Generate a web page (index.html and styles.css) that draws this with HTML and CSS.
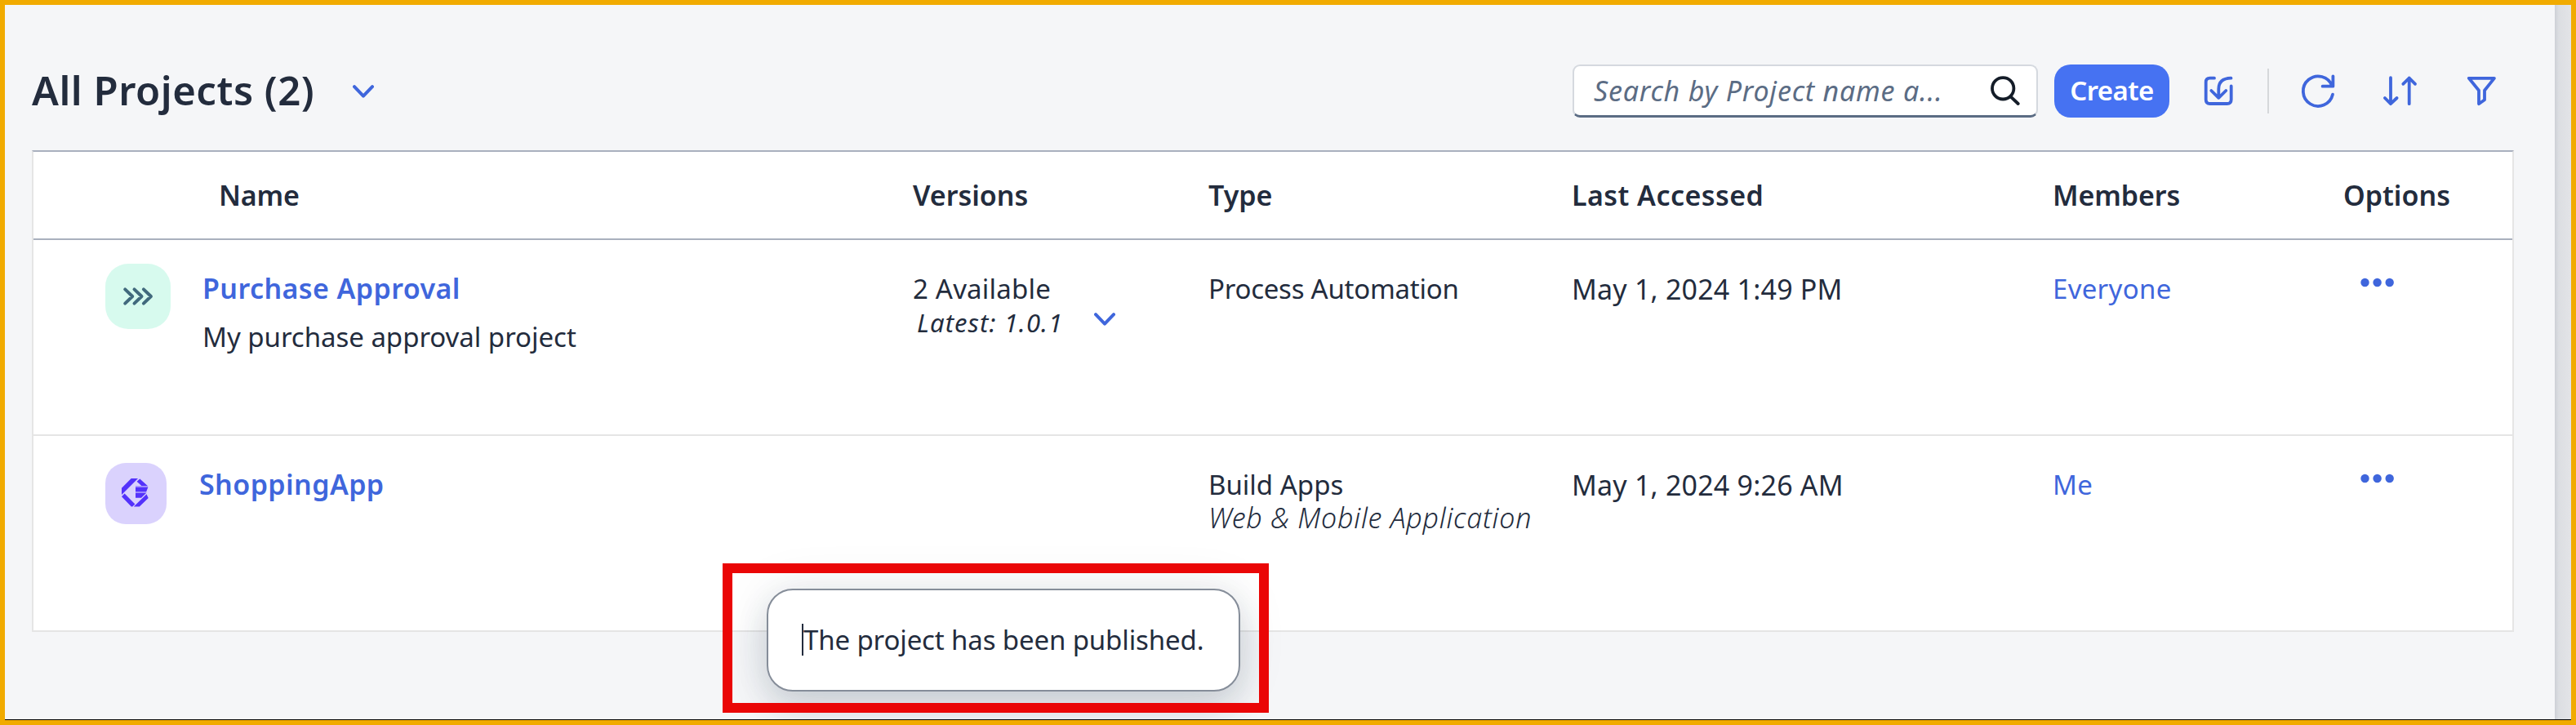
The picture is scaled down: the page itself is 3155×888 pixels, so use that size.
FILE: index.html
```
<!DOCTYPE html>
<html lang="en">
<head>
<meta charset="utf-8">
<title>All Projects</title>
<link rel="stylesheet" href="styles.css">
</head>
<body>
<div class="frame">
  <main class="page">
    <header class="toolbar">
      <h1 class="title">All Projects (2)</h1>
      <svg class="chevron title-chevron" viewBox="0 0 26 16"><path d="M2 2.2 13 13.6 24 2.2"/></svg>
      <div class="search">
        <span class="search-text">Search by Project name a...</span>
        <svg class="search-icon" viewBox="0 0 36 36"><circle cx="15.2" cy="15.3" r="13.2"/><path d="M24.6 25.4 33.7 34"/></svg>
      </div>
      <button class="create">Create</button>
      <svg class="tool tool-import" viewBox="0 0 60 65"><path d="M25 16.7H19.7Q14.7 16.7 14.7 21.7V43Q14.7 48 19.7 48H40.7Q45.7 48 45.7 43V26.5M45.5 16.7C35 17 30.3 22 30.3 30V40.3M21.3 32 30.3 40.8 39.3 32"/></svg>
      <span class="separator"></span>
      <svg class="tool tool-refresh" viewBox="0 0 60 65"><path d="M48 36.7A18.3 18.3 0 1 1 47.3 26.3M48.4 14.3V26.7H35.6"/></svg>
      <svg class="tool tool-sort" viewBox="0 0 60 65"><path d="M19 16.2V48M11.9 41 19 48.2 26.6 41M41.7 48.2V16.5M34.3 23.8 41.7 16.5 49 23.8"/></svg>
      <svg class="tool tool-filter" viewBox="0 0 60 65"><path d="M14.8 16.8H45.9L34 31.7V43.2L27 48.2V31.7Z"/></svg>
    </header>

    <section class="table">
      <div class="row head">
        <div class="cell h-name">Name</div>
        <div class="cell h-versions">Versions</div>
        <div class="cell h-type">Type</div>
        <div class="cell h-accessed">Last Accessed</div>
        <div class="cell h-members">Members</div>
        <div class="cell h-options">Options</div>
      </div>

      <div class="row item">
        <div class="name">
          <svg class="badge badge-process" viewBox="0 0 80 80"><path d="M24.2 31.4 33.2 40 24.2 48.6M35.5 31.4 44.5 40 35.5 48.6M46.9 31.4 55.9 40 46.9 48.6"/></svg>
          <div class="label">
            <a class="link-name">Purchase Approval</a>
            <span class="description">My purchase approval project</span>
          </div>
        </div>
        <div class="cell">
          <div class="available">2 Available</div>
          <div class="latest"><span>Latest: 1.0.1</span><svg class="chevron" viewBox="0 0 26 16"><path d="M2 2.2 13 13.6 24 2.2"/></svg></div>
        </div>
        <div class="cell process">Process Automation</div>
        <div class="cell date">May 1, 2024 1:49 PM</div>
        <div class="cell"><a class="member">Everyone</a></div>
        <div class="options"><svg class="dots" viewBox="0 0 42 12"><circle cx="5.5" cy="6" r="5.2"/><circle cx="20.6" cy="6" r="5.2"/><circle cx="35.7" cy="6" r="5.2"/></svg></div>
      </div>

      <div class="row item">
        <div class="name name-app">
          <svg class="badge badge-app" viewBox="0 0 75 75"><path d="M31.7 19H40L20 39V30.7ZM42.3 19.4 52 28.2H44.5L38.6 22.7ZM20 41.2 23.6 37.4 36.4 50.4 33.2 53.6H31.8ZM34.8 53.6H41.8L52.7 43 50.5 38.2ZM37 29.6H52.4L50.3 35H37ZM37 37H50L44 42.8H37Z"/><path class="tint" d="M37 28.2H52V29.6H37ZM37 35H50.3V37H37Z"/></svg>
          <div class="label"><a class="link-name link-app">ShoppingApp</a></div>
        </div>
        <div class="cell"></div>
        <div class="cell"><div>Build Apps</div><div class="subtype">Web &amp; Mobile Application</div></div>
        <div class="cell date">May 1, 2024 9:26 AM</div>
        <div class="cell"><a class="member">Me</a></div>
        <div class="options"><svg class="dots" viewBox="0 0 42 12"><circle cx="5.5" cy="6" r="5.2"/><circle cx="20.6" cy="6" r="5.2"/><circle cx="35.7" cy="6" r="5.2"/></svg></div>
      </div>
    </section>
  </main>
  <aside class="scrollbar"></aside>
  <div class="toast"><span class="caret"></span>The project has been published.</div>
  <div class="highlight"></div>
</div>
</body>
</html>
```
FILE: styles.css
```
* { box-sizing: border-box; }

body {
  margin: 0;
  font-family: "Noto Sans", sans-serif;
  font-size: 33px;
  line-height: 40px;
  color: #232c3d;
}

svg { display: block; flex: none; }

.frame {
  position: relative;
  display: flex;
  width: 3155px;
  height: 888px;
  border: 6px solid #f1ab00;
  background: #f5f6f8;
  overflow: hidden;
}

.frame::after {
  content: "";
  position: absolute;
  left: 0;
  right: 0;
  bottom: 0;
  height: 1px;
  background: #000;
}

.page { flex: 1; padding: 73px 50px 0 33px; }

.scrollbar {
  width: 20px;
  background: linear-gradient(90deg, #cdd0d6, #dcdee2 25%, #e3e4e7);
}

.toolbar { display: flex; align-items: center; height: 65px; }

.title {
  margin: 0 0 3px;
  font-size: 49px;
  font-weight: 600;
  line-height: 60px;
  letter-spacing: 0.53px;
  white-space: nowrap;
}

.chevron {
  width: 26px;
  height: 16px;
  fill: none;
  stroke: #3f66dc;
  stroke-width: 4;
  stroke-linecap: round;
  stroke-linejoin: round;
}

.title-chevron { margin-left: 47px; }

.search {
  display: flex;
  align-items: center;
  justify-content: space-between;
  width: 570px;
  height: 65px;
  margin-left: auto;
  padding: 0 20px 1px 24px;
  border: 2px solid #d5d9df;
  border-bottom: 3px solid #5b6c84;
  border-radius: 9px;
  background: #fff;
}

.search-text {
  color: #5b6c84;
  font-size: 34px;
  font-style: italic;
  letter-spacing: 0.78px;
  white-space: nowrap;
}

.search-icon {
  width: 36px;
  height: 36px;
  fill: none;
  stroke: #141c28;
  stroke-width: 3.8;
  stroke-linecap: round;
}

.create {
  width: 141px;
  height: 65px;
  margin-left: 20px;
  padding: 0 0 1px;
  border: 0;
  border-radius: 20px;
  background: #4672f2;
  color: #fff;
  font: 600 33px/40px "Noto Sans", sans-serif;
  letter-spacing: -0.6px;
}

.tool {
  width: 60px;
  height: 65px;
  margin-left: 30px;
  fill: none;
  stroke: #3f66dc;
  stroke-width: 3.8;
  stroke-linecap: round;
  stroke-linejoin: round;
}

.separator { width: 2px; height: 55px; margin-left: 30px; background: #d6d8db; }
.tool-sort { margin-left: 40px; }
.tool-filter { margin: 0 10px 0 40px; }

.table {
  margin-top: 40px;
  border: 2px solid #e5e5e5;
  border-top-color: #a9b0be;
  background: #fff;
}

.row {
  display: grid;
  grid-template-columns: 989px 362px 445px 589px 356px 1fr;
  padding-left: 88px;
}

.head {
  height: 108px;
  padding-top: 33px;
  border-bottom: 2px solid #a9b0be;
  font-size: 34px;
  font-weight: 600;
}

.item { height: 240px; border-bottom: 2px solid #e5e5e5; }
.item:last-child { height: 238px; border-bottom: 0; }
.item .cell { padding-top: 40px; white-space: nowrap; }

.h-name { padding-left: 139px; letter-spacing: -0.2px; }
.h-accessed { letter-spacing: 0.45px; }
.h-members { letter-spacing: -0.1px; }

.name { display: flex; gap: 39px; padding-top: 29px; }
.label { display: flex; flex-direction: column; gap: 20px; padding-top: 10px; }
.name-app { gap: 40px; padding-top: 33px; }
.name-app .label { padding-top: 6px; }

.badge { width: 80px; height: 80px; border-radius: 28px; }

.badge-process {
  background: #d7faee;
  fill: none;
  stroke: #41697d;
  stroke-width: 4;
  stroke-linecap: round;
  stroke-linejoin: round;
}

.badge-app {
  width: 75px;
  height: 75px;
  border-radius: 25px;
  background: #dad2fd;
  fill: #5433fb;
}

.tint { fill: #9c8afc; }

.link-name { color: #3f66dc; font-size: 34px; font-weight: 600; letter-spacing: 0.42px; }
.description { letter-spacing: -0.03px; }
.available { letter-spacing: 0.2px; }

.latest {
  display: flex;
  align-items: center;
  gap: 38px;
  padding-left: 5px;
  font-size: 31px;
  line-height: 42px;
  font-style: italic;
  letter-spacing: 1.1px;
}

.latest .chevron { margin-bottom: 8px; }

.process { letter-spacing: -0.25px; }
.subtype { font-size: 34px; font-weight: 300; font-style: italic; letter-spacing: 0.73px; }
.date { font-size: 34px; letter-spacing: 0.2px; }
.member { color: #3f66dc; letter-spacing: 0.3px; }

.options { padding: 46px 0 0 21px; }
.dots { width: 42px; height: 12px; fill: #3f66dc; }

.toast {
  position: absolute;
  left: 933px;
  top: 715px;
  width: 580px;
  height: 126px;
  padding: 41px 0 0 43px;
  border: 2px solid #858d99;
  border-radius: 32px;
  background: #fff;
  box-shadow: 0 20px 40px rgba(34, 53, 72, 0.16), 0 0 60px rgba(34, 53, 72, 0.1);
  letter-spacing: -0.13px;
  white-space: nowrap;
}

.caret {
  position: absolute;
  left: 41px;
  top: 41px;
  width: 2px;
  height: 39px;
  background: #232c3d;
}

.highlight {
  position: absolute;
  left: 879px;
  top: 684px;
  width: 669px;
  height: 183px;
  border: 12px solid #ea0606;
}
```
